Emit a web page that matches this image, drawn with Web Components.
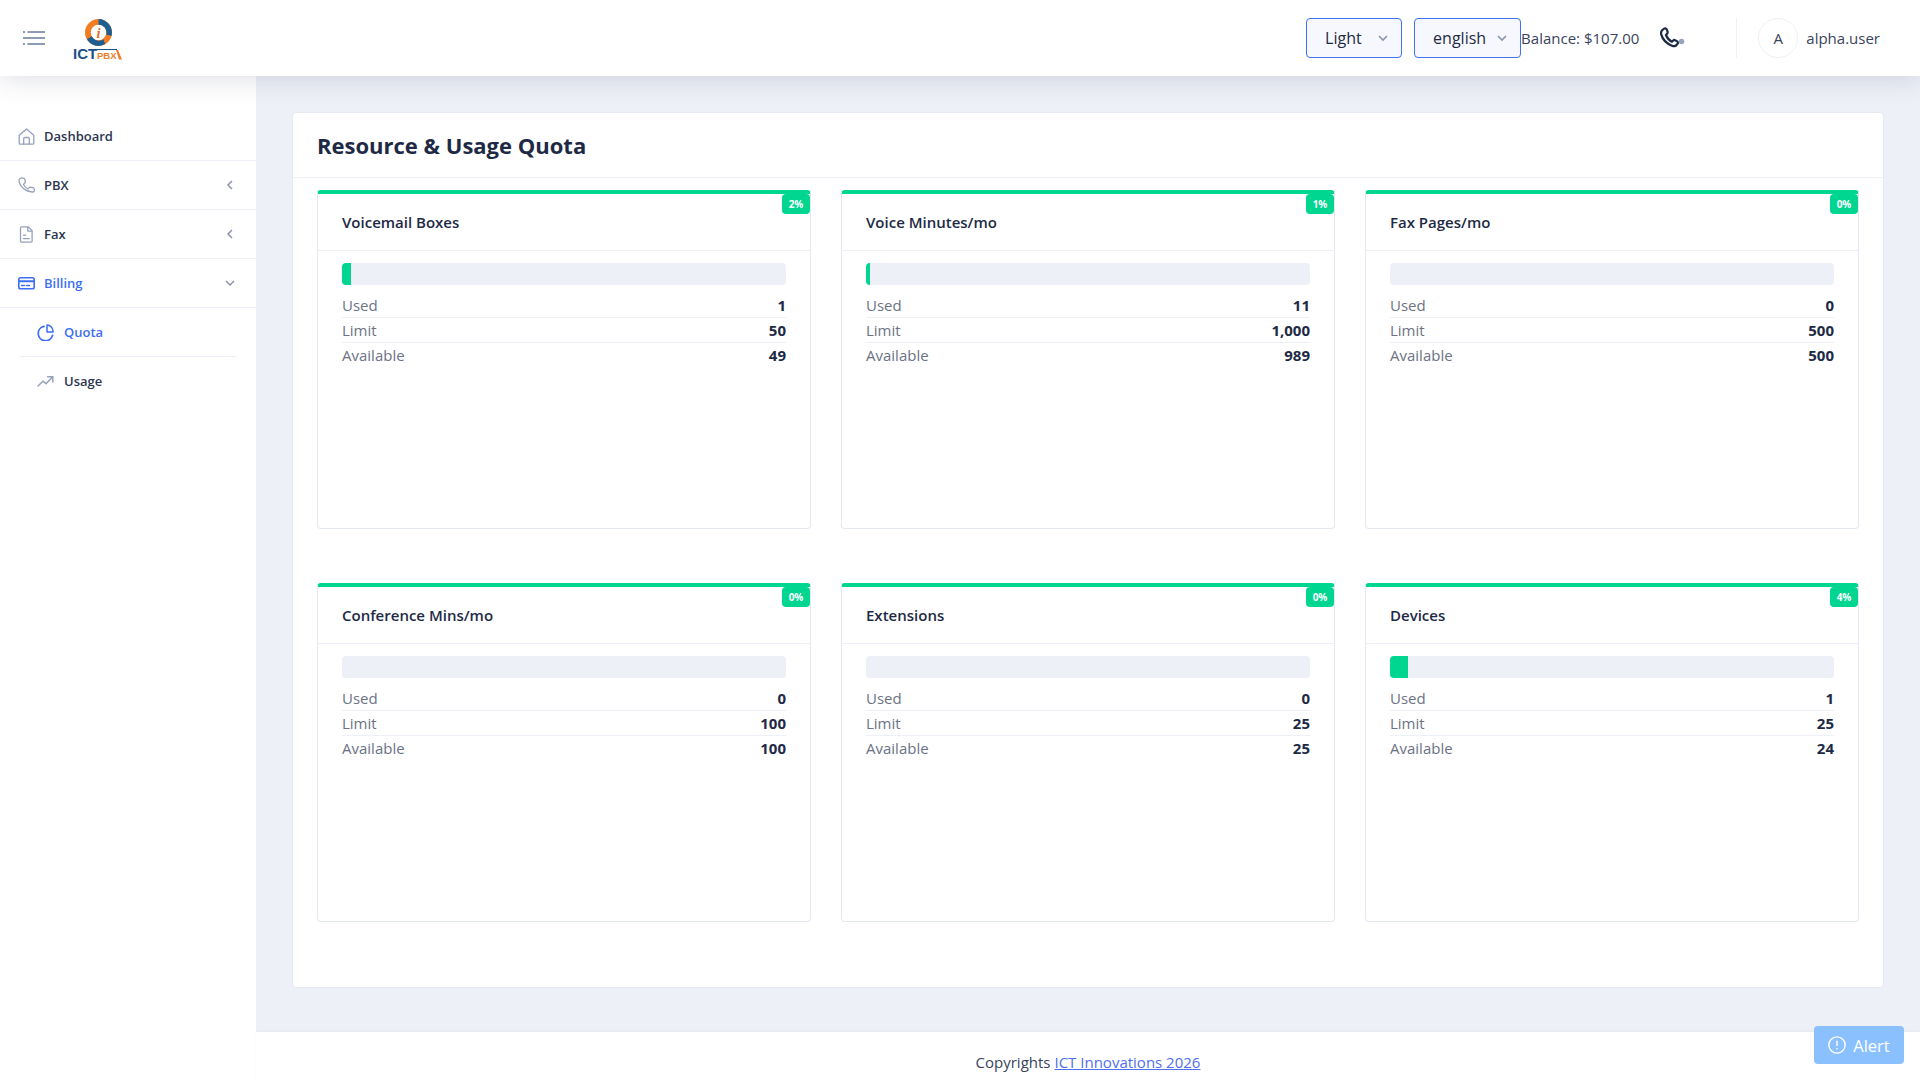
<!DOCTYPE html>
<html lang="en">
<head>
<meta charset="utf-8">
<title>Resource &amp; Usage Quota</title>
<style>
  html, body { margin: 0; height: 100%; }
  body {
    background: #edf0f7;
    font-family: "Open Sans", "Liberation Sans", sans-serif;
    color: #1e2a45;
    overflow: hidden;
  }
</style>
</head>
<body>
<app-shell>
  <top-bar slot="header"></top-bar>
  <side-nav slot="nav"></side-nav>
  <quota-panel heading="Resource &amp; Usage Quota">
    <quota-card name="Voicemail Boxes" pct="2" fill="2" used="1" limit="50" avail="49"></quota-card>
    <quota-card name="Voice Minutes/mo" pct="1" fill="1" used="11" limit="1,000" avail="989"></quota-card>
    <quota-card name="Fax Pages/mo" pct="0" fill="0" used="0" limit="500" avail="500"></quota-card>
    <quota-card name="Conference Mins/mo" pct="0" fill="0" used="0" limit="100" avail="100"></quota-card>
    <quota-card name="Extensions" pct="0" fill="0" used="0" limit="25" avail="25"></quota-card>
    <quota-card name="Devices" pct="4" fill="4" used="1" limit="25" avail="24"></quota-card>
  </quota-panel>
  <page-footer slot="footer"></page-footer>
</app-shell>
<alert-button></alert-button>

<script>
// icons used in the side menu, all on a 17x17 box
const icons = {
  home: '<path d="M1.200 7.300 8.500 .9l7.300 6.400v7.900a1 1 0 0 1-1 1H2.200a1 1 0 0 1-1-1z"/><path d="M5.700 16.100v-5.600a1 1 0 0 1 1-1h3.600a1 1 0 0 1 1 1v5.600"/>',
  phone: '<path d="M4.600 1 6 1.400c.5.100.8.500.9 1l.4 2.700c0 .4-.1.700-.4 1L5.400 7.500c1.100 2 2.500 3.400 4.500 4.500l1.400-1.400c.3-.3.600-.4 1-.4l2.700.4c.5.100.9.400 1 .9l.4 1.400c.2 1-.5 2-1.500 2.100C7.600 15.400 1.500 9.400 1 3.300.9 1.800 3 .7 4.600 1z"/>',
  file: '<path d="M3.500.9h6.700l3.900 3.900v10.400a1 1 0 0 1-1 1H3.500a1 1 0 0 1-1-1V1.900a1 1 0 0 1 1-1z"/><path d="M9.800 1.100v4h4.100M5.500 9.200h2.200M5.500 12.600h5.800"/>',
  card: '<rect x=".8" y="2.800" width="15.400" height="11" rx="1.800" stroke-width="1.600"/><path d="M.8 6.300h15.400" stroke-width="2"/><path d="M3.600 10.600h3M8.600 10.600h2.800" stroke-width="1.500"/>',
  pie: '<path d="M7 2.300A7.300 7.300 0 1 0 15.600 11.300" stroke-width="1.700"/><path d="M10 1a6.300 6.300 0 0 1 6 6v1h-6z" stroke-width="1.500"/>',
  trend: '<path d="M1 13 6 8.200l3 2.500L15.500 4" stroke-linejoin="miter" stroke-width="1.500"/><path d="M10.500 3.700h5.300V9" stroke-width="1.500"/>'
};

const shellTpl = document.createElement("template");
shellTpl.innerHTML = `
  <style>
    :host { display: grid; grid-template-columns: 256px 1fr; grid-template-rows: 76px 1fr 48px; height: 1080px; }
    ::slotted([slot=header]) { grid-column: 1 / 3; grid-row: 1; z-index: 2; }
    ::slotted([slot=nav]) { grid-column: 1; grid-row: 2 / 4; }
    main { grid-column: 2; grid-row: 2; padding: 36px 36px 0 36px; min-width: 0; }
    ::slotted([slot=footer]) { grid-column: 2; grid-row: 3; }
  </style>
  <slot name="header"></slot>
  <slot name="nav"></slot>
  <main><slot></slot></main>
  <slot name="footer"></slot>
`;
class AppShell extends HTMLElement {
  constructor() {
    super();
    this.attachShadow({ mode: "open" });
    this.shadowRoot.appendChild(shellTpl.content.cloneNode(true));
  }
}

const topTpl = document.createElement("template");
topTpl.innerHTML = `
  <style>
    :host { display: flex; align-items: center; height: 76px; background: #fff; padding: 0 40px 0 23px;
      box-shadow: 0 4px 24px rgba(60,70,100,.16); box-sizing: border-box; font-size: 15px; color: #2b3550; }
    .burger { width: 22px; height: 16px; display: block; }
    .logo { margin-left: 28px; width: 50px; height: 41px; margin-top: 2px; display: flex; flex-direction: column; align-items: flex-start; }
    .logo svg.ring { width: 27px; height: 27px; display: block; margin-left: 12px; flex: none; }
    .word { display: flex; align-items: flex-end; font-family: "Liberation Sans", sans-serif; height: 13px; line-height: 13px; white-space: nowrap; margin-top: 1px; }
    .ict { font-size: 15px; font-weight: 700; color: #1c4f86; line-height: 12px; width: 24px; flex: none; }
    .pbx { font-size: 9.500px; line-height: 9px; font-weight: 700; color: #ef7d2d; border-top: 1px solid #1c4f86; padding-top: 1px; flex: none; }
    .tail { width: 6px; height: 10px; display: block; flex: none; margin-left: -1px; }
    .right { margin-left: auto; display: flex; align-items: center; height: 40px; }
    .sel { box-sizing: border-box; height: 40px; border: 1px solid #3e73f0; border-radius: 4px; background: #f6f8fd; display: flex;
      align-items: center; color: #1f2a44; font-size: 16px; font-weight: 500; padding-left: 18px; }
    .sel svg { width: 12px; height: 12px; fill: none; stroke: #8a94ab; stroke-width: 1.600; margin-left: auto; margin-right: 12px; }
    .light { width: 96px; margin-right: 12px; }
    .lang { width: 107px; }
    .bal { color: #3a445c; font-size: 15px; white-space: nowrap; }
    .call { width: 26px; height: 22px; margin-left: 21px; margin-right: 50px; display: block; }
    .sep { width: 1px; height: 40px; background: #edf0f7; margin-right: 21px; }
    .avatar { box-sizing: border-box; width: 40px; height: 40px; border: 1px solid #edf0f7; border-radius: 50%; display: flex; align-items: center; justify-content: center; font-size: 15px; color: #3a445c; margin-right: 8px; }
    .user { font-size: 15px; color: #3a445c; }
  </style>
  <svg class="burger" viewBox="0 0 22 16" fill="none" stroke="#8f9ab5" stroke-width="2.200"><path d="M4.500 2h17.500M0 2h2M0 8h22M4.500 14h17.500M0 14h2"/></svg>
  <div class="logo">
    <svg class="ring" viewBox="0 0 28 28">
      <circle cx="14" cy="14" r="11" fill="none" stroke="#f27c22" stroke-width="6"/>
      <path d="M14 0a14 14 0 0 1 13.500 17.500l-5.500-1.500A8 8 0 0 0 14 6z" fill="#1c5f92"/>
      <path d="M2 21a14 14 0 0 0 19 5l-2-5a8 8 0 0 1-12-3z" fill="#1c5f92"/>
      <circle cx="14" cy="14" r="7.800" fill="#fff"/>
      <text x="14" y="19.500" text-anchor="middle" font-family="Liberation Serif, serif" font-style="italic" font-weight="700" font-size="15" fill="#e4702a">i</text>
    </svg>
    <div class="word"><span class="ict">ICT</span><span class="pbx">PBX</span>
      <svg class="tail" viewBox="0 0 6 10"><path d="M0 0h2l4 9.500H3z" fill="#ef7d2d"/></svg></div>
  </div>
  <div class="right">
    <div class="sel light">Light<svg viewBox="0 0 12 12"><path d="M2 4l4 4 4-4"/></svg></div>
    <div class="sel lang">english<svg viewBox="0 0 12 12"><path d="M2 4l4 4 4-4"/></svg></div>
    <span class="bal">Balance: $107.00</span>
    <svg class="call" viewBox="0 0 26 22" fill="none" stroke="#1f2a44" stroke-width="2.200"><path d="M3.800 1.900c1.100-.7 2.300-.6 2.800.3l1 2.600c.2.700 0 1.200-.4 1.700L6 8c1.100 3 3.100 5.200 5.900 6.700l1.500-1.300c.5-.5 1.100-.6 1.700-.2l2.100 1.200c.8.600 1 1.500.3 2.500-1.100 1.800-3.300 2.800-5.500 1.800C6 16.300 2.500 12.200 1.200 7.400.600 5.200 2 3 3.800 1.900z"/><circle cx="21.500" cy="14.500" r="2.800" fill="#98a3bd" stroke="none"/></svg>
    <div class="sep"></div>
    <div class="avatar">A</div>
    <span class="user">alpha.user</span>
  </div>
`;
class TopBar extends HTMLElement {
  constructor() {
    super();
    this.attachShadow({ mode: "open" });
    this.shadowRoot.appendChild(topTpl.content.cloneNode(true));
  }
}

const itemTpl = document.createElement("template");
itemTpl.innerHTML = `
  <style>
    :host { display: flex; align-items: center; height: 48px; box-sizing: content-box; color: #2d3650; font-size: 13px; font-weight: 600;
      border-bottom: 1px solid #edf0f7; padding-left: 18px; padding-right: 20px; }
    :host([sub]) { margin: 0 20px; padding: 0 0 0 17px; }
    :host([active]) { color: #3d6ff5; }
    :host([last]) { border-bottom: 0; }
    svg.ic { width: 17px; height: 17px; flex: none; fill: none; stroke: #97a2ba; stroke-width: 1.300; margin-right: 9px; stroke-linecap: round; stroke-linejoin: round; }
    :host([sub]) svg.ic { margin-right: 10px; }
    :host([active]) svg.ic { stroke: #3d6ff5; stroke-width: 1.400; }
    .chev { margin-left: auto; width: 12px; height: 12px; fill: none; stroke: #8a94ab; stroke-width: 1.500; }
  </style>
  <svg class="ic" viewBox="0 0 17 17"></svg>
  <span><slot></slot></span>
`;
class NavItem extends HTMLElement {
  constructor() {
    super();
    this.attachShadow({ mode: "open" });
    this.shadowRoot.appendChild(itemTpl.content.cloneNode(true));
    this.shadowRoot.querySelector("svg.ic").innerHTML = icons[this.getAttribute("icon")];
    const chev = this.getAttribute("chev");
    if (chev) {
      const d = chev === "down" ? "M2 4l4 4 4-4" : "M8 2 4 6l4 4";
      this.shadowRoot.querySelector("span").insertAdjacentHTML("afterend",
        `<svg class="chev" viewBox="0 0 12 12"><path d="${d}"/></svg>`);
    }
  }
}

const navTpl = document.createElement("template");
navTpl.innerHTML = `
  <style>
    :host { display: block; background: #fff; padding-top: 36px; }
  </style>
  <nav-item icon="home">Dashboard</nav-item>
  <nav-item icon="phone" chev="left">PBX</nav-item>
  <nav-item icon="file" chev="left">Fax</nav-item>
  <nav-item icon="card" chev="down" active>Billing</nav-item>
  <nav-item icon="pie" sub active>Quota</nav-item>
  <nav-item icon="trend" sub last>Usage</nav-item>
`;
class SideNav extends HTMLElement {
  constructor() {
    super();
    this.attachShadow({ mode: "open" });
    this.shadowRoot.appendChild(navTpl.content.cloneNode(true));
  }
}

const panelTpl = document.createElement("template");
panelTpl.innerHTML = `
  <style>
    :host { display: block; box-sizing: border-box; height: 876px; background: #fff; border: 1px solid #e6eaf2; border-radius: 4px; }
    h1 { margin: 0; height: 64px; display: flex; align-items: center; padding-left: 24px; font-size: 22px; font-weight: 700; color: #1e2a45; border-bottom: 1px solid #edf0f7; }
    .grid { display: grid; grid-template-columns: repeat(3, 1fr); column-gap: 30px; row-gap: 54px; padding: 12px 24px 0; }
  </style>
  <h1></h1>
  <div class="grid"><slot></slot></div>
`;
class QuotaPanel extends HTMLElement {
  constructor() {
    super();
    this.attachShadow({ mode: "open" });
    this.shadowRoot.appendChild(panelTpl.content.cloneNode(true));
    this.shadowRoot.querySelector("h1").textContent = this.getAttribute("heading");
  }
}

const cardTpl = document.createElement("template");
cardTpl.innerHTML = `
  <style>
    :host { display: block; position: relative; box-sizing: border-box; height: 339px; background: #fff; border: 1px solid #e3e7f0; border-top: 4px solid #00d68f; border-radius: 4px; }
    .badge { position: absolute; top: 0; right: 0; width: 28px; height: 20px; background: #00d68f; color: #fff; font-size: 10px; font-weight: 700; display: flex; align-items: center; justify-content: center; border-radius: 4px; }
    .title { height: 56px; display: flex; align-items: center; padding-left: 24px; font-size: 15px; font-weight: 600; color: #1e2a45; border-bottom: 1px solid #edf0f7; }
    .body { padding: 12px 24px 0; }
    .bar { height: 22px; background: #edf0f7; border-radius: 4px; overflow: hidden; margin-bottom: 8px; }
    .fill { height: 100%; background: #00d68f; }
    .row { display: flex; justify-content: space-between; align-items: center; height: 24px; font-size: 15px; color: #6b7385; border-bottom: 1px solid #edf0f7; }
    .row:last-child { border-bottom: 0; }
    .row b { font-weight: 700; color: #1e2a45; }
  </style>
  <span class="badge"></span>
  <div class="title"></div>
  <div class="body">
    <div class="bar"><div class="fill"></div></div>
    <div class="row"><span>Used</span><b class="used"></b></div>
    <div class="row"><span>Limit</span><b class="limit"></b></div>
    <div class="row"><span>Available</span><b class="avail"></b></div>
  </div>
`;
class QuotaCard extends HTMLElement {
  constructor() {
    super();
    this.attachShadow({ mode: "open" });
    const root = this.shadowRoot;
    root.appendChild(cardTpl.content.cloneNode(true));
    root.querySelector(".badge").textContent = this.getAttribute("pct") + "%";
    root.querySelector(".title").textContent = this.getAttribute("name");
    root.querySelector(".fill").style.width = this.getAttribute("fill") + "%";
    root.querySelector(".used").textContent = this.getAttribute("used");
    root.querySelector(".limit").textContent = this.getAttribute("limit");
    root.querySelector(".avail").textContent = this.getAttribute("avail");
  }
}

const footTpl = document.createElement("template");
footTpl.innerHTML = `
  <style>
    :host { display: flex; justify-content: center; align-items: flex-start; background: #fff; font-size: 15px; color: #3a445c; padding-top: 20px; box-sizing: border-box; height: 48px; box-shadow: 0 -1px 3px rgba(60,70,100,.05); }
    a { color: #4f6ef0; text-decoration: underline; margin-left: 4px; }
  </style>
  <span>Copyrights<a href="#">ICT Innovations 2026</a></span>
`;
class PageFooter extends HTMLElement {
  constructor() {
    super();
    this.attachShadow({ mode: "open" });
    this.shadowRoot.appendChild(footTpl.content.cloneNode(true));
  }
}

const alertTpl = document.createElement("template");
alertTpl.innerHTML = `
  <style>
    :host { position: fixed; left: 1814px; top: 1026px; width: 90px; height: 38px; box-sizing: border-box; background: #8bc0ff; border-radius: 4px; color: #fff; display: flex; align-items: center; justify-content: center; gap: 7px; font-size: 16.500px; }
    svg { width: 18px; height: 18px; fill: none; stroke: #fff; stroke-width: 1.300; }
  </style>
  <svg viewBox="0 0 17 17"><circle cx="8.500" cy="8.500" r="7.700"/><path d="M8.500 4.500v5M8.500 11.300v1.200"/></svg>
  <span>Alert</span>
`;
class AlertButton extends HTMLElement {
  constructor() {
    super();
    this.attachShadow({ mode: "open" });
    this.shadowRoot.appendChild(alertTpl.content.cloneNode(true));
  }
}

customElements.define("nav-item", NavItem);
customElements.define("side-nav", SideNav);
customElements.define("top-bar", TopBar);
customElements.define("quota-card", QuotaCard);
customElements.define("quota-panel", QuotaPanel);
customElements.define("page-footer", PageFooter);
customElements.define("alert-button", AlertButton);
customElements.define("app-shell", AppShell);
</script>
</body>
</html>
